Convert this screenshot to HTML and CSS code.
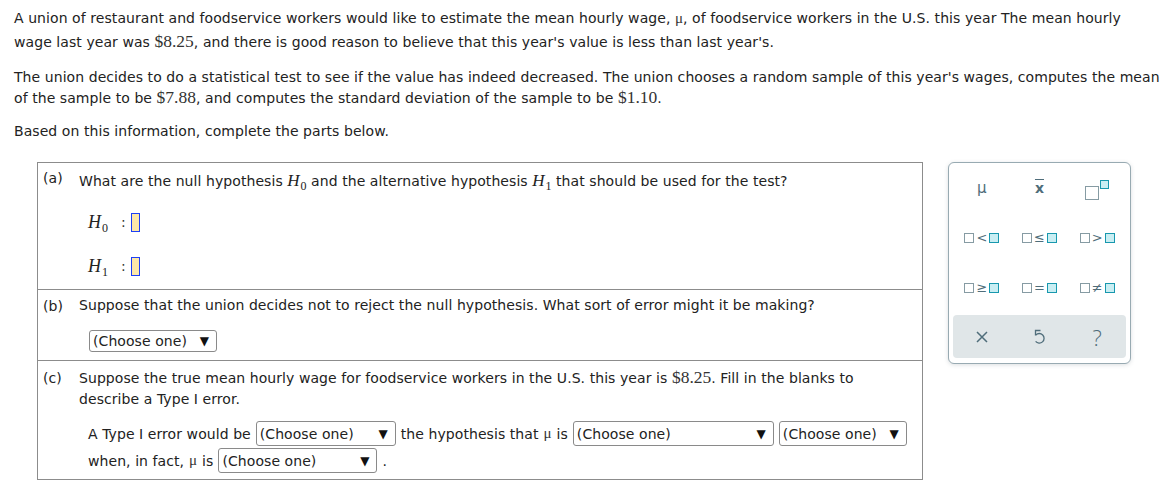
FILE: index.html
```html
<!DOCTYPE html>
<html>
<head>
<meta charset="utf-8">
<link rel="stylesheet" href="styles.css">
</head>
<body>
<div class="problem">
  <p class="p1">A union of restaurant and foodservice workers would like to estimate the mean hourly wage, <span class="mi">μ</span>, of foodservice workers in the U.S. this year The mean hourly<br>wage last year was <span class="mn">$8.25</span>, and there is good reason to believe that this year's value is less than last year's.</p>
  <p class="p2">The union decides to do a statistical test to see if the value has indeed decreased. The union chooses a random sample of this year's wages, computes the mean<br>of the sample to be <span class="mn">$7.88</span>, and computes the standard deviation of the sample to be <span class="mn">$1.10</span>.</p>
  <p class="p3">Based on this information, complete the parts below.</p>

  <div class="work">
    <div class="parts">
      <section class="part part-a">
        <span class="label">(a)</span>
        <div class="content">
          <div class="q">What are the null hypothesis <span class="hv">H<sub>0</sub></span> and the alternative hypothesis <span class="hv">H<sub>1</sub></span> that should be used for the test?</div>
          <div class="hyp first"><span class="hv big">H<sub>0</sub></span><span class="colon">:</span><span class="slot"></span></div>
          <div class="hyp"><span class="hv big">H<sub>1</sub></span><span class="colon">:</span><span class="slot"></span></div>
        </div>
      </section>
      <section class="part part-b">
        <span class="label">(b)</span>
        <div class="content">
          <div class="q">Suppose that the union decides not to reject the null hypothesis. What sort of error might it be making?</div>
          <div class="row-b"><span class="dd w128"><span class="dd-text">(Choose one)</span><span class="dd-arrow">▼</span></span></div>
        </div>
      </section>
      <section class="part part-c">
        <span class="label">(c)</span>
        <div class="content">
          <div class="q q2">Suppose the true mean hourly wage for foodservice workers in the U.S. this year is <span class="mn">$8.25</span>. Fill in the blanks to<br>describe a Type I error.</div>
          <div class="fill first">A Type I error would be <span class="dd w140"><span class="dd-text">(Choose one)</span><span class="dd-arrow">▼</span></span> the hypothesis that <span class="mi">μ</span> is <span class="dd w201"><span class="dd-text">(Choose one)</span><span class="dd-arrow">▼</span></span> <span class="dd w128"><span class="dd-text">(Choose one)</span><span class="dd-arrow">▼</span></span></div>
          <div class="fill">when, in fact, <span class="mi">μ</span> is <span class="dd w159"><span class="dd-text">(Choose one)</span><span class="dd-arrow">▼</span></span> .</div>
        </div>
      </section>
    </div>

    <div class="palette">
      <div class="keys">
        <div class="key"><span class="k-mu">μ</span></div>
        <div class="key"><span class="k-xbar">x</span></div>
        <div class="key"><span class="k-sup"><span class="sq gray big"></span><span class="sq teal small"></span></span></div>
        <div class="key"><span class="cmp"><span class="sq gray"></span><span class="op">&lt;</span><span class="sq teal"></span></span></div>
        <div class="key"><span class="cmp"><span class="sq gray"></span><span class="op">≤</span><span class="sq teal"></span></span></div>
        <div class="key"><span class="cmp"><span class="sq gray"></span><span class="op">&gt;</span><span class="sq teal"></span></span></div>
        <div class="key"><span class="cmp"><span class="sq gray"></span><span class="op">≥</span><span class="sq teal"></span></span></div>
        <div class="key"><span class="cmp"><span class="sq gray"></span><span class="op">=</span><span class="sq teal"></span></span></div>
        <div class="key"><span class="cmp"><span class="sq gray"></span><span class="op">≠</span><span class="sq teal"></span></span></div>
      </div>
      <div class="bar">
        <div class="key">
          <svg width="14" height="14" viewBox="0 0 14 14"><path d="M2 2 L12 12 M12 2 L2 12" stroke="#4f6d7a" stroke-width="1.5" fill="none"/></svg>
        </div>
        <div class="key">
          <svg width="14" height="17" viewBox="0 0 14 17"><path d="M8.5 2.5 L3.5 2.5 L3.5 7.5" stroke="#4f6d7a" stroke-width="1.3" fill="none"/><path d="M3.8 7 A4.8 4.8 0 1 1 3.6 13.4" stroke="#4f6d7a" stroke-width="1.3" fill="none"/></svg>
        </div>
        <div class="key"><span class="k-help">?</span></div>
      </div>
    </div>
  </div>
</div>
</body>
</html>
```

FILE: styles.css
```css
html, body {
  margin: 0;
  padding: 0;
  background: #fff;
}

body {
  font-family: "DejaVu Sans", Verdana, sans-serif;
  font-size: 14px;
  letter-spacing: 0.07px;
  color: #222;
}

.problem {
  padding: 6px 0 0 14px;
}

.problem p {
  margin: 0;
  white-space: nowrap;
}

.p1 {
  line-height: 24px;
}

.p2 {
  margin-top: 13px !important;
  line-height: 21px;
}

.p3 {
  margin-top: 12px !important;
  line-height: 21px;
}

.mn {
  font-family: "Liberation Serif", "Times New Roman", serif;
  font-size: 17.5px;
  line-height: 1;
  letter-spacing: 0;
  color: #333;
}

.mi {
  font-family: "Liberation Serif", "Times New Roman", serif;
  font-size: 15px;
  line-height: 1;
  letter-spacing: 0;
  color: #333;
}

.work {
  display: flex;
  align-items: flex-start;
  margin-top: 20px;
  margin-left: 23px;
  gap: 25px;
}

.parts {
  width: 884px;
  border: 1px solid #8c8c8c;
}

.part {
  display: grid;
  grid-template-columns: 36px 1fr;
  padding-left: 5px;
}

.part + .part {
  border-top: 1px solid #8c8c8c;
}

.label {
  line-height: 14px;
  color: #222;
}

.q {
  line-height: 20px;
}

.hv {
  font-family: "Liberation Serif", "Times New Roman", serif;
  font-style: italic;
  font-size: 17px;
  line-height: 1;
  letter-spacing: 0;
  color: #222;
}

.hv sub {
  font-style: normal;
  font-size: 12px;
  vertical-align: -4px;
  line-height: 0;
  margin-left: 1px;
}

/* part a */
.part-a {
  padding-top: 8px;
  padding-bottom: 11px;
}

.hyp {
  display: flex;
  align-items: center;
  height: 24px;
  margin-top: 20px;
  padding-left: 9px;
}

.hyp.first {
  margin-top: 19px;
}

.hv.big {
  font-size: 18px;
  width: 30px;
}

.colon {
  font-size: 14px;
  margin-left: 3px;
  margin-right: 5px;
  color: #333;
}

.slot {
  display: inline-block;
  width: 7px;
  height: 17px;
  background: #fde8a9;
  border: 1px solid #1d3ff5;
}

/* part b */
.part-b {
  padding-top: 5px;
  padding-bottom: 8px;
}

.part-b .label {
  margin-top: 4px;
}

.row-b {
  margin-top: 15px;
  padding-left: 10px;
  display: flex;
}

/* dropdowns */
.dd {
  display: inline-flex;
  align-items: center;
  justify-content: space-between;
  height: 22px;
  box-sizing: border-box;
  border: 1px solid #8a8a8a;
  border-radius: 3px;
  background: #fff;
  padding: 0 7px 0 3px;
  vertical-align: middle;
  color: #222;
}

.dd-arrow {
  font-size: 12px;
  color: #111;
}

.w128 { width: 128px; }
.w140 { width: 140px; }
.w159 { width: 159px; }
.w201 { width: 201px; }

/* part c */
.part-c {
  padding-top: 7px;
  padding-bottom: 5px;
}

.part-c .label {
  margin-top: 3px;
}

.q2 {
  line-height: 21px;
}

.fill {
  display: flex;
  align-items: center;
  gap: 5px;
  height: 27px;
  padding-left: 9px;
  white-space: nowrap;
}

.fill.first {
  margin-top: 10px;
}

.fill .dd {
  height: 25px;
}

/* palette */
.palette {
  border: 1px solid #98aab2;
  border-radius: 6px;
  box-shadow: 0 1px 4px rgba(60, 80, 90, 0.18);
  background: #fff;
  padding: 0 4px 5px 4px;
  width: 173px;
  letter-spacing: 0;
}

.keys {
  display: grid;
  grid-template-columns: repeat(3, 1fr);
  grid-auto-rows: 50px;
}

.key {
  display: flex;
  align-items: center;
  justify-content: center;
  color: #4f6d7a;
}

.k-mu {
  font-size: 15px;
  color: #4f6d7a;
}

.k-xbar {
  font-size: 14px;
  font-weight: bold;
  color: #4f6d7a;
  text-decoration: overline;
  line-height: 16px;
}

.k-sup {
  display: flex;
  align-items: flex-start;
  height: 20px;
  margin-top: 3px;
}

.sq {
  display: inline-block;
  box-sizing: border-box;
  width: 10px;
  height: 10px;
}

.sq.gray {
  border: 1.5px solid #869ba3;
  background: #fff;
}

.sq.teal {
  border: 1.5px solid #1898ae;
  background: #c9eef3;
}

.sq.big {
  width: 14px;
  height: 14px;
  margin-top: 6px;
}

.sq.small {
  width: 9px;
  height: 9px;
  margin-left: 1px;
}

.cmp {
  display: flex;
  align-items: center;
  gap: 1px;
}

.op {
  font-size: 13px;
  line-height: 12px;
  color: #4f6d7a;
  padding: 0 1px;
}

.bar {
  margin-top: 2px;
  height: 43px;
  background: #e0e6e8;
  border-radius: 4px;
  display: grid;
  grid-template-columns: repeat(3, 1fr);
}

.k-help {
  font-family: "Open Sans", "DejaVu Sans", sans-serif;
  font-weight: 300;
  font-size: 22px;
  color: #4f6d7a;
}
```
